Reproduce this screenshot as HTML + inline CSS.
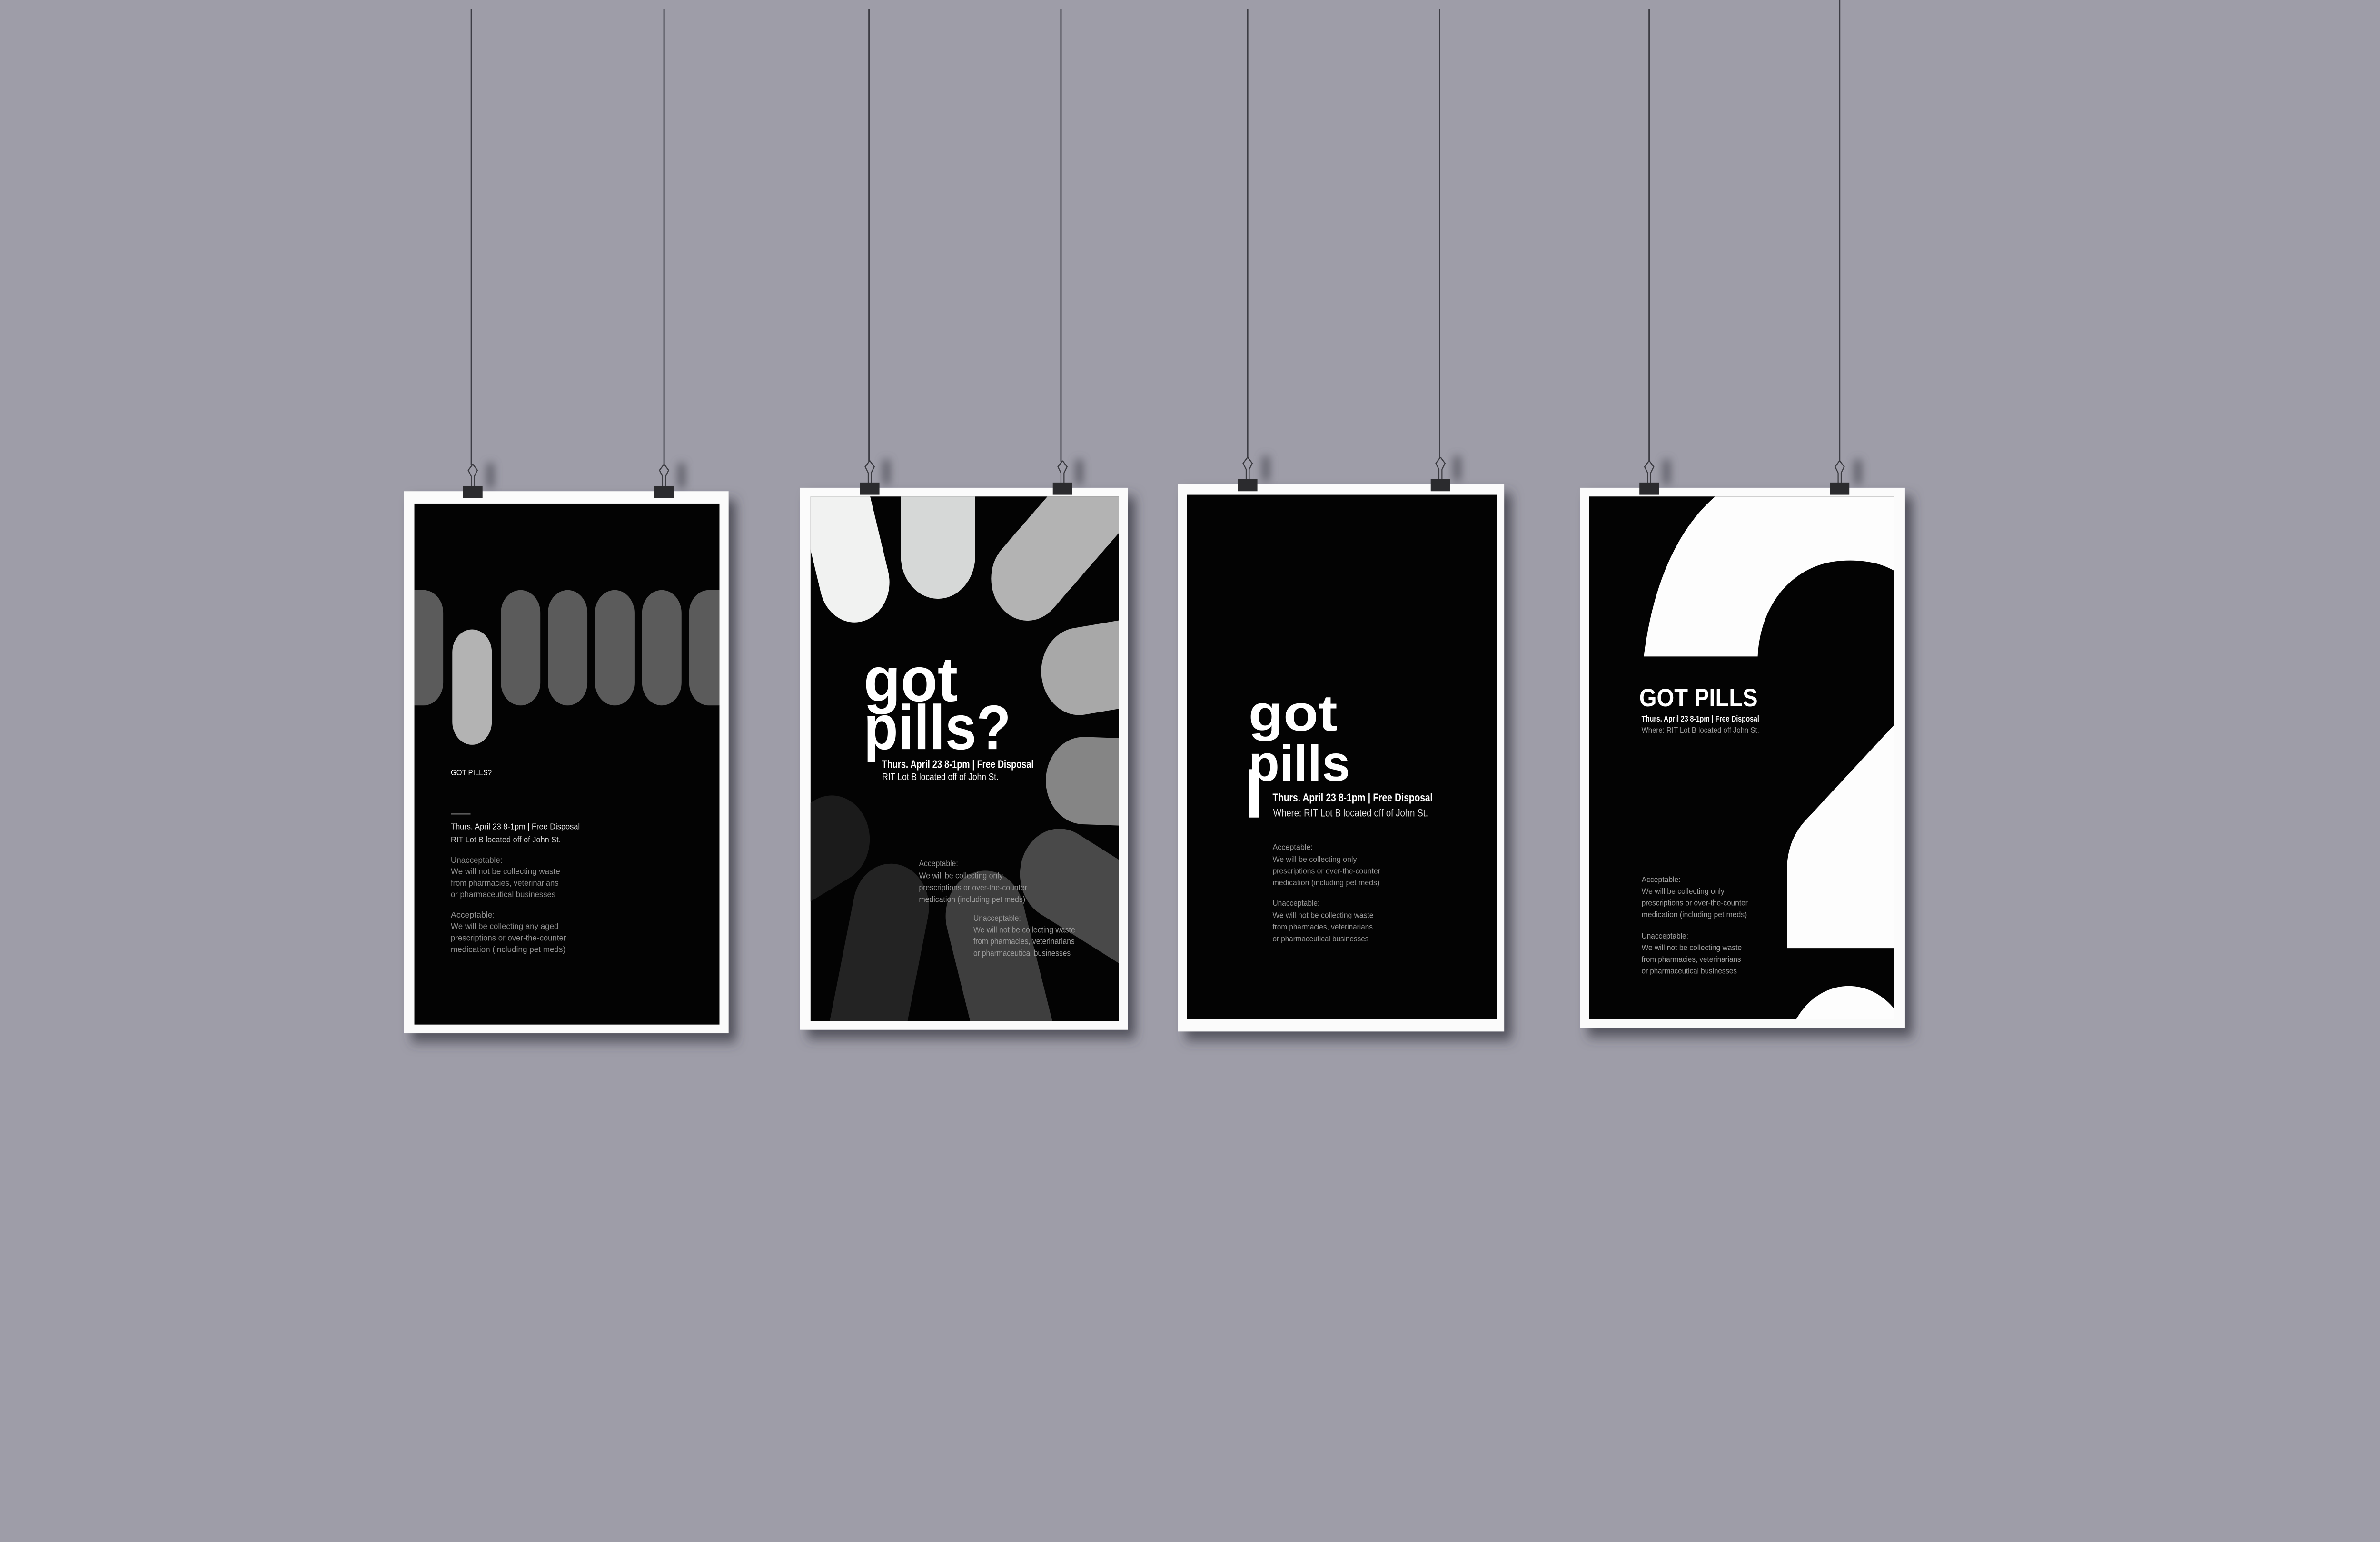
<!DOCTYPE html>
<html><head><meta charset="utf-8">
<style>
html,body{margin:0;padding:0;background:#9e9da8;width:100%;height:100%;overflow:hidden;}
svg{display:block;position:fixed;left:0;top:0;width:100vw;height:100vh;}
text{font-family:"Liberation Sans",sans-serif;}
</style></head>
<body>
<svg viewBox="0 0 1568 882" preserveAspectRatio="none" xmlns="http://www.w3.org/2000/svg">
<defs>
<filter id="sh" x="-10%" y="-10%" width="130%" height="130%">
<feDropShadow dx="5" dy="5" stdDeviation="3.5" flood-color="#3a3a44" flood-opacity="0.75"/>
</filter>
<filter id="csh" x="-100%" y="-50%" width="400%" height="200%">
<feGaussianBlur stdDeviation="2.5"/>
</filter>
<clipPath id="c2"><rect x="534" y="284" width="203" height="300"/></clipPath>
<clipPath id="c1"><rect x="273" y="288" width="201" height="298"/></clipPath>
<clipPath id="c4"><rect x="1047" y="284" width="201" height="299"/></clipPath>
</defs>
<rect width="1568" height="882" fill="#9e9da8"/>

<g stroke="#3c3c44" stroke-width="0.9">
<line x1="310.5" y1="5" x2="310.5" y2="266"/>
<line x1="437.5" y1="5" x2="437.5" y2="266"/>
<line x1="572.5" y1="5" x2="572.5" y2="264"/>
<line x1="699" y1="5" x2="699" y2="264"/>
<line x1="822" y1="5" x2="822" y2="262"/>
<line x1="948.5" y1="5" x2="948.5" y2="262"/>
<line x1="1086.5" y1="5" x2="1086.5" y2="264"/>
<line x1="1212" y1="0" x2="1212" y2="264"/>
</g>

<g fill="#55545e" opacity="0.7" filter="url(#csh)">
<rect x="320" y="265" width="6" height="14"/><rect x="446" y="265" width="6" height="14"/>
<rect x="581" y="263" width="6" height="14"/><rect x="708" y="263" width="6" height="14"/>
<rect x="831" y="261" width="6" height="14"/><rect x="957" y="261" width="6" height="14"/>
<rect x="1095" y="263" width="6" height="14"/><rect x="1221" y="263" width="6" height="14"/>
</g>

<g filter="url(#sh)" fill="#fbfbfb">
<rect x="266" y="281" width="214" height="310"/>
<rect x="527" y="279" width="216" height="310"/>
<rect x="776" y="277" width="215" height="313"/>
<rect x="1041" y="279" width="214" height="309"/>
</g>

<!-- POSTER 1 -->
<rect x="273" y="288" width="201" height="298" fill="#030303"/>
<g clip-path="url(#c1)" fill="#5b5b5b">
<rect x="260" y="337.5" width="32" height="66" rx="13"/>
<rect x="298" y="360" width="26" height="66" rx="13" fill="#b3b3b3"/>
<rect x="330" y="337.5" width="26" height="66" rx="13"/>
<rect x="361" y="337.5" width="26" height="66" rx="13"/>
<rect x="392" y="337.5" width="26" height="66" rx="13"/>
<rect x="423" y="337.5" width="26" height="66" rx="13"/>
<rect x="454" y="337.5" width="32" height="66" rx="13"/>
</g>
<g font-size="4.8">
<text x="297" y="443.5" fill="#fff" textLength="27" lengthAdjust="spacingAndGlyphs">GOT PILLS?</text>
<rect x="297" y="465.3" width="13" height="0.6" fill="#777"/>
<text x="297" y="474.3" fill="#eee" textLength="85" lengthAdjust="spacingAndGlyphs">Thurs. April 23 8-1pm | Free Disposal</text>
<text x="297" y="481.8" fill="#ccc" textLength="72.5" lengthAdjust="spacingAndGlyphs">RIT Lot B located off of John St.</text>
<g fill="#8f8f8f">
<text x="297" y="493.5" textLength="34" lengthAdjust="spacingAndGlyphs">Unacceptable:</text>
<text x="297" y="500" textLength="72" lengthAdjust="spacingAndGlyphs">We will not be collecting waste</text>
<text x="297" y="506.6" textLength="71" lengthAdjust="spacingAndGlyphs">from pharmacies, veterinarians</text>
<text x="297" y="513.2" textLength="69" lengthAdjust="spacingAndGlyphs">or pharmaceutical businesses</text>
<text x="297" y="524.8" textLength="29" lengthAdjust="spacingAndGlyphs">Acceptable:</text>
<text x="297" y="531.4" textLength="71" lengthAdjust="spacingAndGlyphs">We will be collecting any aged</text>
<text x="297" y="538" textLength="76" lengthAdjust="spacingAndGlyphs">prescriptions or over-the-counter</text>
<text x="297" y="544.6" textLength="75.6" lengthAdjust="spacingAndGlyphs">medication (including pet meds)</text>
</g>
</g>

<!-- POSTER 2 -->
<rect x="534" y="284" width="203" height="300" fill="#030303"/>
<g clip-path="url(#c2)" stroke-linecap="round" fill="none">
<line x1="540" y1="250" x2="563" y2="333" stroke="#f1f2f1" stroke-width="46"/>
<line x1="618" y1="240" x2="618" y2="318" stroke="#d6d8d7" stroke-width="49"/>
<line x1="677" y1="331" x2="750" y2="258" stroke="#b3b3b3" stroke-width="48"/>
<line x1="711" y1="384" x2="765" y2="376" stroke="#a8a8a8" stroke-width="50"/>
<line x1="714" y1="446.5" x2="765" y2="448" stroke="#858585" stroke-width="50"/>
<line x1="698" y1="500" x2="775" y2="542" stroke="#494949" stroke-width="52"/>
<line x1="649" y1="524" x2="678" y2="625" stroke="#3e3e3e" stroke-width="52"/>
<line x1="587" y1="519" x2="563" y2="625" stroke="#232323" stroke-width="50"/>
<line x1="548" y1="480" x2="495" y2="508" stroke="#1b1b1b" stroke-width="50"/>
</g>
<g fill="#fff" font-weight="bold">
<text x="569" y="401" font-size="36" textLength="62" lengthAdjust="spacingAndGlyphs">got</text>
<text x="569" y="428.5" font-size="36" textLength="97" lengthAdjust="spacingAndGlyphs">pills?</text>
<text x="581" y="439.2" font-size="6.3" textLength="100" lengthAdjust="spacingAndGlyphs">Thurs. April 23 8-1pm | Free Disposal</text>
</g>
<text x="581.2" y="446.2" font-size="5.6" fill="#fff" textLength="76.7" lengthAdjust="spacingAndGlyphs">RIT Lot B located off of John St.</text>
<g font-size="4.8" fill="#9a9a9a">
<text x="605.4" y="495.5" textLength="25.8" lengthAdjust="spacingAndGlyphs">Acceptable:</text>
<text x="605.4" y="502.4" textLength="55.3" lengthAdjust="spacingAndGlyphs">We will be collecting only</text>
<text x="605.4" y="509.2" textLength="71.3" lengthAdjust="spacingAndGlyphs">prescriptions or over-the-counter</text>
<text x="605.4" y="516" textLength="70.1" lengthAdjust="spacingAndGlyphs">medication (including pet meds)</text>
<text x="641.3" y="526.7" textLength="31.3" lengthAdjust="spacingAndGlyphs">Unacceptable:</text>
<text x="641.3" y="533.4" textLength="67" lengthAdjust="spacingAndGlyphs">We will not be collecting waste</text>
<text x="641.3" y="540" textLength="66.7" lengthAdjust="spacingAndGlyphs">from pharmacies, veterinarians</text>
<text x="641.3" y="546.7" textLength="64" lengthAdjust="spacingAndGlyphs">or pharmaceutical businesses</text>
</g>

<!-- POSTER 3 -->
<rect x="782" y="283" width="204" height="300" fill="#030303"/>
<g fill="#fff" font-weight="bold">
<text x="822.5" y="417.8" font-size="29" textLength="58.6" lengthAdjust="spacingAndGlyphs">got</text>
<text x="822.5" y="446.6" font-size="29" textLength="67" lengthAdjust="spacingAndGlyphs">pills</text>
<rect x="823" y="440" width="6.6" height="27.6"/>
<text x="838.4" y="458.3" font-size="6.4" textLength="105.5" lengthAdjust="spacingAndGlyphs">Thurs. April 23 8-1pm | Free Disposal</text>
</g>
<text x="838.8" y="467" font-size="6" fill="#e6e6e6" textLength="102" lengthAdjust="spacingAndGlyphs">Where: RIT Lot B located off of John St.</text>
<g font-size="4.6" fill="#979797">
<text x="838.4" y="486" textLength="26.5" lengthAdjust="spacingAndGlyphs">Acceptable:</text>
<text x="838.4" y="493" textLength="55.5" lengthAdjust="spacingAndGlyphs">We will be collecting only</text>
<text x="838.4" y="499.7" textLength="71" lengthAdjust="spacingAndGlyphs">prescriptions or over-the-counter</text>
<text x="838.4" y="506.4" textLength="70.5" lengthAdjust="spacingAndGlyphs">medication (including pet meds)</text>
<text x="838.4" y="518" textLength="31" lengthAdjust="spacingAndGlyphs">Unacceptable:</text>
<text x="838.4" y="525" textLength="66.5" lengthAdjust="spacingAndGlyphs">We will not be collecting waste</text>
<text x="838.4" y="531.6" textLength="66" lengthAdjust="spacingAndGlyphs">from pharmacies, veterinarians</text>
<text x="838.4" y="538.4" textLength="63.3" lengthAdjust="spacingAndGlyphs">or pharmaceutical businesses</text>
</g>

<!-- POSTER 4 -->
<rect x="1047" y="284" width="201" height="299" fill="#030303"/>
<g clip-path="url(#c4)" fill="#fdfdfd">
<path d="M1130,284 L1250,284 L1250,327.5 C1240,322 1228,320 1213.6,320.7 C1185,322 1160,342 1158,375.5 L1083,375.5 C1088,340 1102,305 1130,284 Z"/>
<path d="M1250,412.7 L1190,468.8 C1182,476 1177.4,486 1177.4,496 L1177.4,542.3 L1250,542.3 Z"/>
<circle cx="1218" cy="605" r="41"/>
</g>
<g fill="#fff" font-weight="bold">
<text x="1080" y="404" font-size="14.4" textLength="78" lengthAdjust="spacingAndGlyphs">GOT PILLS</text>
<text x="1081.5" y="412.7" font-size="4.8" textLength="77.5" lengthAdjust="spacingAndGlyphs">Thurs. April 23 8-1pm | Free Disposal</text>
</g>
<text x="1081.5" y="419.2" font-size="4.8" fill="#9a9a9a" textLength="77.5" lengthAdjust="spacingAndGlyphs">Where: RIT Lot B located off John St.</text>
<g font-size="4.5" fill="#a0a0a0">
<text x="1081.5" y="504.6" textLength="25.7" lengthAdjust="spacingAndGlyphs">Acceptable:</text>
<text x="1081.5" y="511.2" textLength="54.6" lengthAdjust="spacingAndGlyphs">We will be collecting only</text>
<text x="1081.5" y="517.9" textLength="70" lengthAdjust="spacingAndGlyphs">prescriptions or over-the-counter</text>
<text x="1081.5" y="524.6" textLength="69.5" lengthAdjust="spacingAndGlyphs">medication (including pet meds)</text>
<text x="1081.5" y="536.8" textLength="30.8" lengthAdjust="spacingAndGlyphs">Unacceptable:</text>
<text x="1081.5" y="543.5" textLength="66" lengthAdjust="spacingAndGlyphs">We will not be collecting waste</text>
<text x="1081.5" y="550.2" textLength="65.5" lengthAdjust="spacingAndGlyphs">from pharmacies, veterinarians</text>
<text x="1081.5" y="556.8" textLength="62.8" lengthAdjust="spacingAndGlyphs">or pharmaceutical businesses</text>
</g>

<!-- binder clips -->
<g>
<g transform="translate(311.5,281)">
<path d="M0,-15.5 L-3,-12 L-1,-8.5 L-1,-2 M0,-15.5 L3,-12 L1,-8.5 L1,-2" stroke="#3a3a40" stroke-width="0.7" fill="none"/>
<rect x="-6.4" y="-3" width="12.8" height="7" fill="#2b2b2e"/>
</g>
<g transform="translate(437.5,281)">
<path d="M0,-15.5 L-3,-12 L-1,-8.5 L-1,-2 M0,-15.5 L3,-12 L1,-8.5 L1,-2" stroke="#3a3a40" stroke-width="0.7" fill="none"/>
<rect x="-6.4" y="-3" width="12.8" height="7" fill="#2b2b2e"/>
</g>
<g transform="translate(573,279)">
<path d="M0,-15.5 L-3,-12 L-1,-8.5 L-1,-2 M0,-15.5 L3,-12 L1,-8.5 L1,-2" stroke="#3a3a40" stroke-width="0.7" fill="none"/>
<rect x="-6.4" y="-3" width="12.8" height="7" fill="#2b2b2e"/>
</g>
<g transform="translate(700,279)">
<path d="M0,-15.5 L-3,-12 L-1,-8.5 L-1,-2 M0,-15.5 L3,-12 L1,-8.5 L1,-2" stroke="#3a3a40" stroke-width="0.7" fill="none"/>
<rect x="-6.4" y="-3" width="12.8" height="7" fill="#2b2b2e"/>
</g>
<g transform="translate(822,277)">
<path d="M0,-15.5 L-3,-12 L-1,-8.5 L-1,-2 M0,-15.5 L3,-12 L1,-8.5 L1,-2" stroke="#3a3a40" stroke-width="0.7" fill="none"/>
<rect x="-6.4" y="-3" width="12.8" height="7" fill="#2b2b2e"/>
</g>
<g transform="translate(949,277)">
<path d="M0,-15.5 L-3,-12 L-1,-8.5 L-1,-2 M0,-15.5 L3,-12 L1,-8.5 L1,-2" stroke="#3a3a40" stroke-width="0.7" fill="none"/>
<rect x="-6.4" y="-3" width="12.8" height="7" fill="#2b2b2e"/>
</g>
<g transform="translate(1086.5,279)">
<path d="M0,-15.5 L-3,-12 L-1,-8.5 L-1,-2 M0,-15.5 L3,-12 L1,-8.5 L1,-2" stroke="#3a3a40" stroke-width="0.7" fill="none"/>
<rect x="-6.4" y="-3" width="12.8" height="7" fill="#2b2b2e"/>
</g>
<g transform="translate(1212,279)">
<path d="M0,-15.5 L-3,-12 L-1,-8.5 L-1,-2 M0,-15.5 L3,-12 L1,-8.5 L1,-2" stroke="#3a3a40" stroke-width="0.7" fill="none"/>
<rect x="-6.4" y="-3" width="12.8" height="7" fill="#2b2b2e"/>
</g>
</g>
</svg>
</body></html>
